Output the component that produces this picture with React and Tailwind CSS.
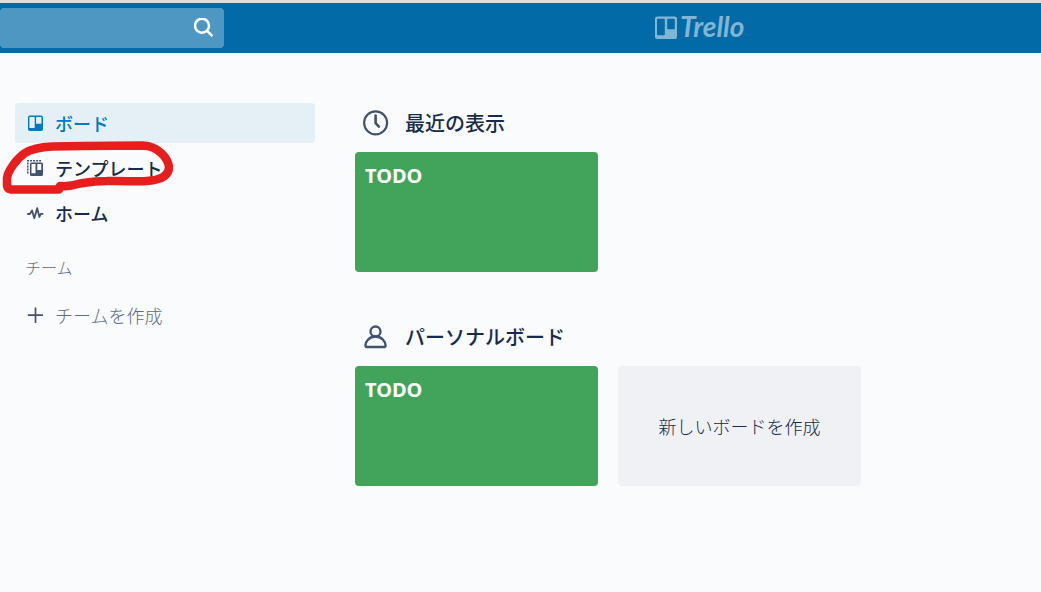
const boards = ['TODO'];

function BoardIcon() {
  return (
    <svg viewBox="0 0 16 16" className="size-4" fill="currentColor" aria-hidden="true">
      <path fillRule="evenodd" d="M3 .5h11a2 2 0 0 1 2 2v11.500a2 2 0 0 1-2 2H3a2 2 0 0 1-2-2V2.500a2 2 0 0 1 2-2zM3 2a.6.6 0 0 0-.6.6v9.800a.6.6 0 0 0 .6.6h4.100a.6.6 0 0 0 .6-.6V2.600a.6.6 0 0 0-.6-.6zM9.700 2a.6.6 0 0 0-.6.6v5.600a.6.6 0 0 0 .6.6h4.200a.6.6 0 0 0 .6-.6V2.600a.6.6 0 0 0-.6-.6z" />
    </svg>
  );
}

function TemplateIcon() {
  return (
    <svg viewBox="0 0 16 16" className="size-4" fill="none" aria-hidden="true">
      <path d="M.8 13.500V.8h13.500" stroke="currentColor" strokeWidth="1.500" strokeDasharray="2 1" />
      <path fill="currentColor" fillRule="evenodd" d="M4.500 2.500h10A1.500 1.500 0 0 1 16 4v10.500a1.500 1.500 0 0 1-1.500 1.500h-10A1.500 1.500 0 0 1 3 14.500V4a1.500 1.500 0 0 1 1.500-1.500zM4.500 3.900v9.300h4V3.900zM10.300 3.900v6h4V3.900z" />
    </svg>
  );
}

function PulseIcon() {
  return (
    <svg viewBox="0 0 16 16" className="size-4 overflow-visible" fill="none" stroke="currentColor" strokeWidth="1.800" strokeLinecap="round" strokeLinejoin="round" aria-hidden="true">
      <path d="M.9 9h2L5 5.500 7.300 13.200 10.200 3.200 12.400 12 13.800 8.800h1.800" />
    </svg>
  );
}

function PlusIcon() {
  return (
    <svg viewBox="0 0 16 16" className="size-4" fill="none" stroke="currentColor" strokeWidth="1.700" strokeLinecap="round" aria-hidden="true">
      <path d="M8.500 1.200v14M1.500 8.200h14" />
    </svg>
  );
}

function ClockIcon() {
  return (
    <svg viewBox="0 0 26 26" className="size-[26px]" fill="none" stroke="currentColor" strokeLinecap="round" strokeLinejoin="round" aria-hidden="true">
      <circle cx="12.600" cy="12.800" r="11.500" strokeWidth="2.200" />
      <path d="M12.600 5.500V13.200l3.300 3.400" strokeWidth="2.600" />
    </svg>
  );
}

function PersonIcon() {
  return (
    <svg viewBox="0 0 26 26" className="size-[26px]" fill="none" stroke="currentColor" strokeWidth="2.300" strokeLinejoin="round" aria-hidden="true">
      <circle cx="12.500" cy="7.500" r="5" />
      <path d="M12.500 12.500C6.500 12.500 2.600 17 2.400 21.600c0 .8.500 1.400 1.300 1.400h17.600c.8 0 1.300-.6 1.300-1.400C22.400 17 18.500 12.500 12.500 12.500z" />
    </svg>
  );
}

function NavItem({ icon, label, active }) {
  return (
    <a
      href="#"
      aria-current={active ? 'page' : undefined}
      className={
        active
          ? 'flex h-10 items-center gap-3 rounded bg-[#e4f0f6] px-3 text-lg font-medium text-[#0079bf]'
          : 'flex h-10 items-center gap-3 rounded px-3 text-lg font-medium text-[#172b4d]'
      }
    >
      <span className={active ? '' : 'text-[#42526e]'}>{icon}</span>
      {label}
    </a>
  );
}

function BoardTile({ name }) {
  return (
    <a href="#" className="h-[120px] w-[243px] rounded bg-[#42a45b] p-2.5 font-['Noto_Sans'] text-xl leading-7 font-bold text-white">
      {name}
    </a>
  );
}

function BoardSection({ icon, title, children }) {
  return (
    <section>
      <h2 className="flex h-10 items-center gap-4 pl-2 text-xl font-medium text-[#172b4d]">
        <span className="text-[#42526e]">{icon}</span>
        {title}
      </h2>
      <div className="mt-[9px] flex flex-wrap gap-5">{children}</div>
    </section>
  );
}

export default function App() {
  return (
    <div className="min-h-screen bg-[#fafbfd] font-['Noto_Sans_CJK_JP',sans-serif]">
      <header className="flex h-[53px] items-center border-t-3 border-[#dcdcdc] bg-[#026aa7]">
        <form role="search" className="flex h-10 w-56 items-center rounded bg-[#4e97c2] pr-2.5">
          <input type="search" aria-label="検索" className="min-w-0 flex-1 bg-transparent px-3 text-white outline-none" />
          <button type="submit" aria-label="検索を実行" className="text-white">
            <svg viewBox="0 0 20 20" className="size-5" fill="none" stroke="currentColor" strokeWidth="2.500" strokeLinecap="round" aria-hidden="true">
              <circle cx="8" cy="7.700" r="7" />
              <path d="M13.200 13l4.500 4.300" />
            </svg>
          </button>
        </form>
        <a href="#" className="ml-[430px] flex h-10 items-center gap-0.5 text-[#80b5d3]">
          <svg viewBox="0 0 24 24" className="size-6" fill="currentColor" aria-hidden="true">
            <path fillRule="evenodd" d="M3 .5h18a2 2 0 0 1 2 2v18.500a2 2 0 0 1-2 2H3a2 2 0 0 1-2-2V2.500a2 2 0 0 1 2-2zM4 2.800a1 1 0 0 0-1 1v14.500a1 1 0 0 0 1 1h5.800a1 1 0 0 0 1-1V3.800a1 1 0 0 0-1-1zM14.200 2.800a1 1 0 0 0-1 1v8.500a1 1 0 0 0 1 1h5.600a1 1 0 0 0 1-1V3.800a1 1 0 0 0-1-1z" />
          </svg>
          <span className="pb-1 font-['Lato'] text-[28px] leading-8 font-bold italic">Trello</span>
        </a>
      </header>

      <div className="flex gap-10 px-[15px] pt-[50px]">
        <nav aria-label="メニュー" className="w-[300px] shrink-0">
          <ul className="flex flex-col gap-[5px]">
            <li>
              <NavItem icon={<BoardIcon />} label="ボード" active />
            </li>
            <li className="relative">
              <NavItem icon={<TemplateIcon />} label="テンプレート" />
              <svg viewBox="0 0 180 60" className="pointer-events-none absolute -top-2.5 -left-[15px] h-[60px] w-[180px]" fill="none" stroke="#e61e1e" strokeWidth="8.500" strokeLinecap="round" strokeLinejoin="round" aria-hidden="true">
                <path d="M59 51.500H11Q7 51 7 47V40C8 33 16 21 25 15C33 10 42 9 52 8.500L83 8L143 7.500C158 8 168 20 169 29C169 38 160 42 147 43C138 44 124 42.500 107 43C96 43 90 44 80 45.500C72 48 66 48.500 60 48" />
              </svg>
            </li>
            <li>
              <NavItem icon={<PulseIcon />} label="ホーム" />
            </li>
          </ul>
          <h2 className="mt-[22px] px-2.5 text-base leading-6 font-light text-[#5e6c84]">チーム</h2>
          <button type="button" className="mt-4 flex h-10 w-full items-center gap-3 px-3 text-lg font-light text-[#5e6c84]">
            <span className="text-[#42526e]"><PlusIcon /></span>
            チームを作成
          </button>
        </nav>

        <main className="flex min-w-0 flex-1 flex-col gap-[45px]">
          <BoardSection icon={<ClockIcon />} title="最近の表示">
            {boards.map((name) => <BoardTile key={name} name={name} />)}
          </BoardSection>
          <BoardSection icon={<PersonIcon />} title="パーソナルボード">
            {boards.map((name) => <BoardTile key={name} name={name} />)}
            <button type="button" className="h-[120px] w-[243px] rounded bg-[#f0f1f5] text-lg font-light text-[#172b4d]">
              新しいボードを作成
            </button>
          </BoardSection>
        </main>
      </div>
    </div>
  );
}
